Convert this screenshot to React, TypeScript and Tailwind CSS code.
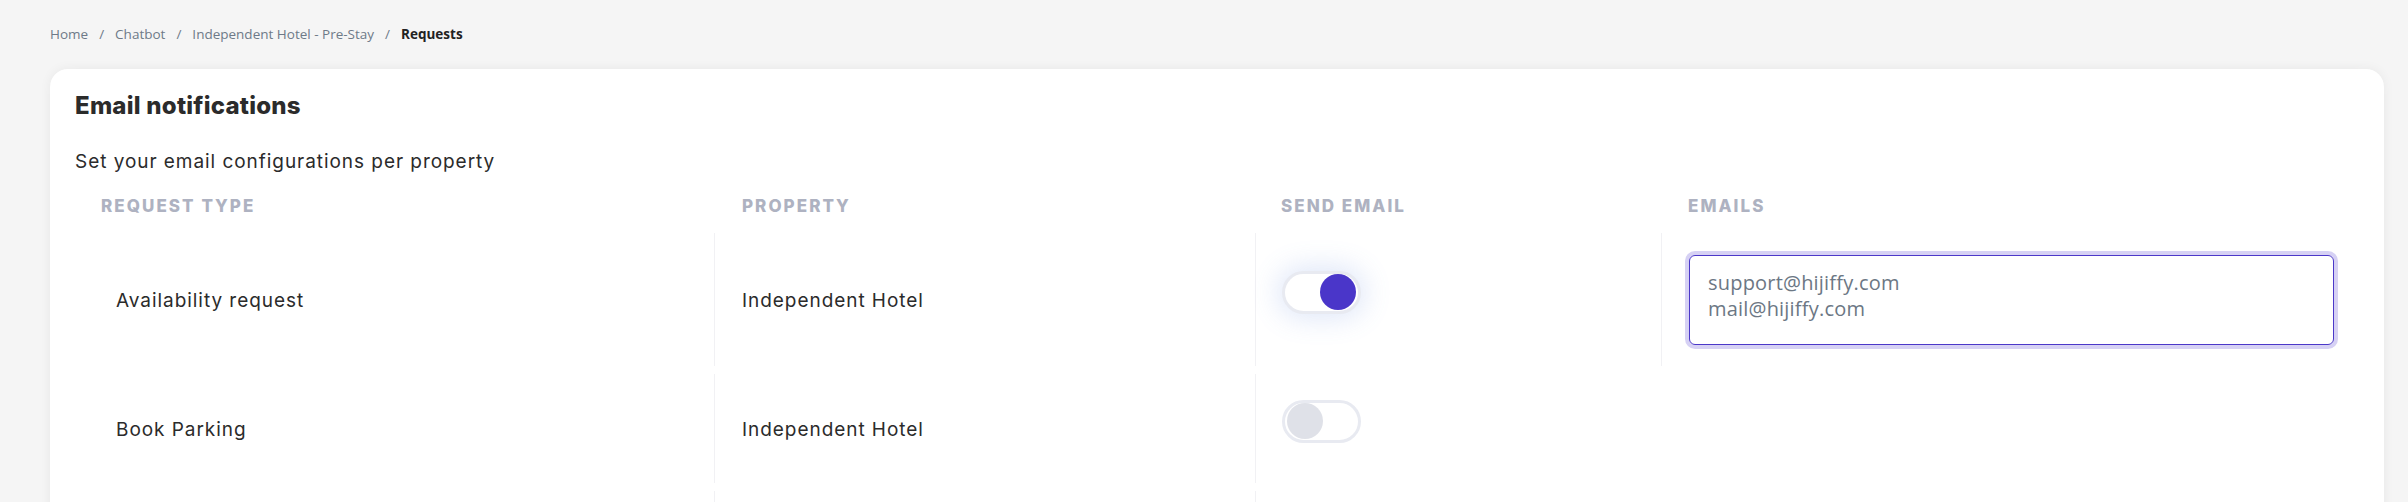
import { useState } from "react";

const rows = [
  { type: "Availability request", property: "Independent Hotel", on: true, emails: "support@hijiffy.com\nmail@hijiffy.com" },
  { type: "Book Parking", property: "Independent Hotel", on: false, emails: "" },
  { type: "Late Check-out", property: "Independent Hotel", on: false, emails: "" },
];

function Toggle({ on, onChange }: { on: boolean; onChange: () => void }) {
  return (
    <button
      onClick={onChange}
      className={`flex items-center w-[79px] h-[43px] mb-[15px] rounded-full border-[3px] border-[#e8eaf1] bg-white px-[2px] ${
        on ? "justify-end shadow-[0_0_28px_4px_rgba(90,130,220,0.2)]" : "justify-start"
      }`}
    >
      <span className={`block w-[36px] h-[36px] rounded-full ${on ? "bg-[#4a36c9]" : "bg-[#dfe1e8]"}`} />
    </button>
  );
}

export default function App() {
  const [state, setState] = useState(rows);

  return (
    <div className="min-h-screen bg-[#f5f5f5] pl-[50px] pr-[24px] pt-[24px] font-['Inter',sans-serif]">
      <nav className="flex items-center h-[20px] text-[13.5px] leading-[20px] text-[#6e7a88] font-['Open_Sans',sans-serif]">
        <span>Home</span>
        <span className="mx-[11px]">/</span>
        <span>Chatbot</span>
        <span className="mx-[11px]">/</span>
        <span>Independent Hotel - Pre-Stay</span>
        <span className="mx-[11px]">/</span>
        <span className="font-bold text-[#222]">Requests</span>
      </nav>

      <div className="mt-[25px] bg-white rounded-[18px] shadow-[0_0_12px_rgba(0,0,0,0.06)] pl-[25px] pr-[24px] pt-[21px] pb-[40px]">
        <h1 className="text-[24px] leading-[32px] font-extrabold tracking-[0.01em] text-[#2b2b2b]">Email notifications</h1>
        <p className="mt-[26px] text-[19px] leading-[28px] tracking-[0.05em] text-[#2b2b2b]">
          Set your email configurations per property
        </p>

        <div className="grid grid-cols-[639px_541px_406px_1fr] pt-[18px] pb-[15px] text-[17px] leading-[24px] font-extrabold tracking-[0.12em] text-[#aeb2c1] uppercase">
          <div className="pl-[26px]">Request type</div>
          <div className="pl-[28px]">Property</div>
          <div className="pl-[26px]">Send email</div>
          <div className="pl-[27px]">Emails</div>
        </div>

        <div className="flex flex-col gap-[8px]">
          {state.map((r, i) => (
            <div
              key={r.type}
              className={`grid grid-cols-[639px_541px_406px_1fr] text-[19px] tracking-[0.05em] text-[#2b2b2b] ${
                i === 0 ? "h-[133px]" : "h-[109px]"
              }`}
            >
              <div className="flex items-center pl-[41px] pt-[4px]">{r.type}</div>
              <div className="flex items-center pl-[27px] pt-[4px] border-l border-[#f1f1f4]">{r.property}</div>
              <div className="flex items-center pl-[26px] border-l border-[#f1f1f4]">
                <Toggle
                  on={r.on}
                  onChange={() => setState(state.map((s, j) => (j === i ? { ...s, on: !s.on } : s)))}
                />
              </div>
              {r.on ? (
                <div className="flex items-center pl-[27px] pr-[26px] border-l border-[#f1f1f4]">
                  <textarea
                    defaultValue={r.emails}
                    className="w-full h-[90px] resize-none rounded-[6px] border border-[#4b38c9] ring-4 ring-[#d6d1f4] outline-none px-[18px] pt-[14px] text-[20px] leading-[26px] tracking-[0.01em] text-[#6c7784] font-['Open_Sans',sans-serif]"
                  />
                </div>
              ) : (
                <div />
              )}
            </div>
          ))}
        </div>
      </div>
    </div>
  );
}
